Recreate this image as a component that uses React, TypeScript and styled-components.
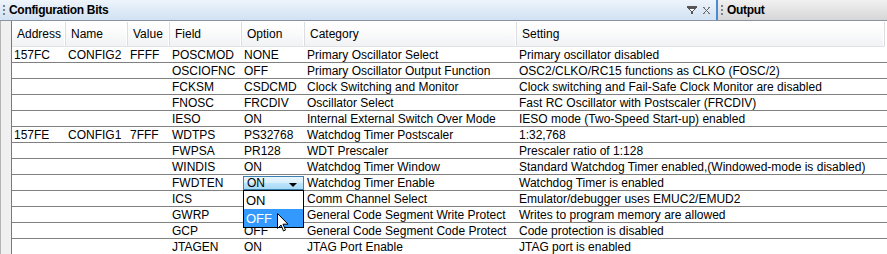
import styled, { createGlobalStyle } from "styled-components";

const GlobalStyle = createGlobalStyle`
  html, body { margin: 0; padding: 0; background: #ffffff; }
  body { font-family: "Liberation Sans", Arial, sans-serif; font-size: 12px; color: #000; }
`;

const Frame = styled.div`
  width: 887px;
  height: 254px;
  overflow: hidden;
  display: flex;
  flex-direction: column;
  background: #fff;
`;

const TitleRow = styled.div`
  display: flex;
  height: 20px;
  border-bottom: 1px solid #8a93a2;
  flex-shrink: 0;
`;

const PanelTitle = styled.div<{ $active?: boolean }>`
  display: flex;
  align-items: center;
  gap: 4px;
  padding-left: 3px;
  width: ${(p) => (p.$active ? "713px" : "auto")};
  flex: ${(p) => (p.$active ? "none" : "1")};
  background: ${(p) =>
    p.$active
      ? "linear-gradient(to bottom, #eef4fb 0%, #dde9f6 55%, #d2e2f3 100%)"
      : "linear-gradient(to bottom, #f1f1f1 0%, #e2e2e2 55%, #d6d6d6 100%)"};
  border-right: ${(p) => (p.$active ? "2px solid #4a8ad0" : "none")};
`;

const Grip = styled.div`
  display: flex;
  flex-direction: column;
  gap: 2px;
  span {
    width: 2px;
    height: 2px;
    background: #7d8690;
  }
`;

const TitleText = styled.span`
  font-weight: bold;
  font-size: 12px;
  letter-spacing: -0.3px;
  flex: 1;
  color: #000;
`;

const TitleIcons = styled.div`
  display: flex;
  align-items: center;
  gap: 6px;
  padding-right: 6px;
`;

const Body = styled.div`
  display: flex;
  flex: 1;
  min-height: 0;
`;

const Gutter = styled.div`
  width: 10px;
  flex-shrink: 0;
  background: #f0f0f0;
  border-left: 1px solid #b4b4b4;
  border-right: 1px solid #7a7a7a;
`;

const Table = styled.div`
  flex: 1;
  display: flex;
  flex-direction: column;
`;

const cols = "54px 62px 42px 72px 63px 212px 1fr";

const HeaderRow = styled.div`
  display: grid;
  grid-template-columns: ${cols};
  height: 24px;
  margin-top: 1px;
  background: linear-gradient(to bottom, #ffffff 0%, #fbfbfb 45%, #f1f2f4 100%);
  border-bottom: 1px solid #e2e3e5;
  margin-right: 2px;
`;

const HeaderCell = styled.div`
  display: flex;
  align-items: center;
  padding-left: 5px;
  border-right: 1px solid #dcdde0;
  box-shadow: inset -1px 0 0 #ffffff;
  color: #000;
`;

const Row = styled.div`
  display: grid;
  grid-template-columns: ${cols};
  height: 15px;
  border-bottom: 1px solid #808080;
  &:last-child { border-bottom: none; }
`;

const Cell = styled.div`
  position: relative;
  padding-left: 2px;
  line-height: 16px;
  white-space: nowrap;
`;

const Combo = styled.div`
  position: absolute;
  left: 1px;
  top: 1px;
  width: 61px;
  height: 14px;
  box-sizing: border-box;
  border: 1px solid #3c7fb1;
  background: linear-gradient(to bottom, #eaf6fd 0%, #d9f0fc 45%, #bee6fd 50%, #a7d9f5 100%);
  display: flex;
  align-items: center;
  padding-left: 3px;
  line-height: 12px;
  z-index: 2;
`;

const ComboArrow = styled.div`
  position: absolute;
  right: 6px;
  top: 6px;
  width: 0;
  height: 0;
  border-left: 4px solid transparent;
  border-right: 4px solid transparent;
  border-top: 4px solid #000;
`;

const DropList = styled.div`
  position: absolute;
  left: 1px;
  top: 15px;
  width: 61px;
  box-sizing: border-box;
  border: 1px solid #000;
  background: #fff;
  z-index: 3;
`;

const DropItem = styled.div<{ $selected?: boolean }>`
  height: 18px;
  line-height: 19px;
  padding-left: 2px;
  font-size: 13px;
  background: ${(p) => (p.$selected ? "#3399ff" : "#fff")};
  color: ${(p) => (p.$selected ? "#fff" : "#000")};
`;

const Pointer = styled.svg`
  position: absolute;
  left: 35px;
  top: 38px;
  z-index: 4;
`;

interface IBit {
  address?: string;
  name?: string;
  value?: string;
  field: string;
  option: string;
  category: string;
  setting: string;
  open?: boolean;
  covered?: boolean;
}

const bits: IBit[] = [
  { address: "157FC", name: "CONFIG2", value: "FFFF", field: "POSCMOD", option: "NONE", category: "Primary Oscillator Select", setting: "Primary oscillator disabled" },
  { field: "OSCIOFNC", option: "OFF", category: "Primary Oscillator Output Function", setting: "OSC2/CLKO/RC15 functions as CLKO (FOSC/2)" },
  { field: "FCKSM", option: "CSDCMD", category: "Clock Switching and Monitor", setting: "Clock switching and Fail-Safe Clock Monitor are disabled" },
  { field: "FNOSC", option: "FRCDIV", category: "Oscillator Select", setting: "Fast RC Oscillator with Postscaler (FRCDIV)" },
  { field: "IESO", option: "ON", category: "Internal External Switch Over Mode", setting: "IESO mode (Two-Speed Start-up) enabled" },
  { address: "157FE", name: "CONFIG1", value: "7FFF", field: "WDTPS", option: "PS32768", category: "Watchdog Timer Postscaler", setting: "1:32,768" },
  { field: "FWPSA", option: "PR128", category: "WDT Prescaler", setting: "Prescaler ratio of 1:128" },
  { field: "WINDIS", option: "ON", category: "Watchdog Timer Window", setting: "Standard Watchdog Timer enabled,(Windowed-mode is disabled)" },
  { field: "FWDTEN", option: "ON", category: "Watchdog Timer Enable", setting: "Watchdog Timer is enabled", open: true },
  { field: "ICS", option: "PGx2", category: "Comm Channel Select", setting: "Emulator/debugger uses EMUC2/EMUD2", covered: true },
  { field: "GWRP", option: "OFF", category: "General Code Segment Write Protect", setting: "Writes to program memory are allowed", covered: true },
  { field: "GCP", option: "OFF", category: "General Code Segment Code Protect", setting: "Code protection is disabled" },
  { field: "JTAGEN", option: "ON", category: "JTAG Port Enable", setting: "JTAG port is enabled" },
];

const headers = ["Address", "Name", "Value", "Field", "Option", "Category", "Setting"];

export default function App() {
  return (
    <>
      <GlobalStyle />
      <Frame>
        <TitleRow>
          <PanelTitle $active>
            <Grip><span /><span /><span /></Grip>
            <TitleText>Configuration Bits</TitleText>
            <TitleIcons>
              <svg width="10" height="9" viewBox="0 0 10 9" shapeRendering="crispEdges">
                <rect x="0" y="0" width="10" height="2" fill="#555" />
                <path d="M1 2 H9 V3 H8 V4 H7 V5 H6 V8 H4 V5 H3 V4 H2 V3 H1 Z" fill="#555" />
                <rect x="3" y="3" width="4" height="1" fill="#fff" />
                <rect x="4" y="4" width="2" height="1" fill="#fff" />
              </svg>
              <svg width="7" height="7" viewBox="0 0 7 7" shapeRendering="crispEdges">
                {[0, 1, 2, 3, 4, 5, 6].map((i) => (
                  <g key={i}>
                    <rect x={i} y={i} width="1" height="1" fill="#666" />
                    <rect x={6 - i} y={i} width="1" height="1" fill="#666" />
                  </g>
                ))}
                <rect x="1" y="0" width="1" height="1" fill="#999" />
                <rect x="5" y="0" width="1" height="1" fill="#999" />
                <rect x="1" y="6" width="1" height="1" fill="#999" />
                <rect x="5" y="6" width="1" height="1" fill="#999" />
              </svg>
            </TitleIcons>
          </PanelTitle>
          <PanelTitle>
            <Grip><span /><span /><span /></Grip>
            <TitleText>Output</TitleText>
          </PanelTitle>
        </TitleRow>
        <Body>
          <Gutter />
          <Table>
            <HeaderRow>
              {headers.map((h) => (
                <HeaderCell key={h}>{h}</HeaderCell>
              ))}
            </HeaderRow>
            <div>
              {bits.map((b) => (
                <Row key={b.field}>
                  <Cell>{b.address}</Cell>
                  <Cell>{b.name}</Cell>
                  <Cell>{b.value}</Cell>
                  <Cell>{b.field}</Cell>
                  <Cell>
                    {b.open ? (
                      <>
                        <Combo>
                          ON
                          <ComboArrow />
                        </Combo>
                        <DropList>
                          <DropItem>ON</DropItem>
                          <DropItem $selected>OFF</DropItem>
                        </DropList>
                        <Pointer width="12" height="19" viewBox="0 0 12 19">
                          <path
                            d="M0.5 0.5 L0.5 15.5 L4 12 L6.5 18 L8.5 17 L6 11.2 L11 11.2 Z"
                            fill="#fff"
                            stroke="#000"
                            strokeWidth="1"
                          />
                        </Pointer>
                      </>
                    ) : b.covered ? null : (
                      b.option
                    )}
                  </Cell>
                  <Cell>{b.category}</Cell>
                  <Cell>{b.setting}</Cell>
                </Row>
              ))}
            </div>
          </Table>
        </Body>
      </Frame>
    </>
  );
}
